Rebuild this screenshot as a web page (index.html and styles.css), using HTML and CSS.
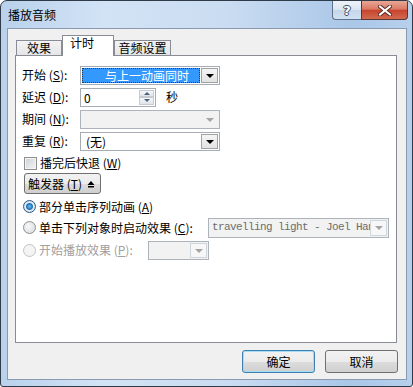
FILE: index.html
```html
<!DOCTYPE html>
<html lang="zh-CN">
<head>
  <meta charset="UTF-8">
  <title>播放音频</title>
  <link rel="stylesheet" href="styles.css">
</head>
<body>
  <div class="window">
    <div class="titlebar">
      <span class="title">播放音频</span>
      <div class="caption">
        <span class="cap-btn help">?</span>
        <span class="cap-btn close">
          <svg width="14" height="11" viewBox="0 0 14 11">
            <path d="M2 1.5 L12 9.5 M12 1.5 L2 9.5" stroke="#5a2a22" stroke-width="4" stroke-linecap="square"/>
            <path d="M2 1.5 L12 9.5 M12 1.5 L2 9.5" stroke="#fff" stroke-width="2" stroke-linecap="square"/>
          </svg>
        </span>
      </div>
    </div>

    <div class="client">
      <div class="tabs">
        <div class="tab first">效果</div>
        <div class="tab active">计时</div>
        <div class="tab third">音频设置</div>
      </div>

      <div class="panel">
        <div class="row">
          <span class="label">开始 (<u>S</u>):</span>
          <div class="combo">
            <span class="combo-sel">与上一动画同时</span>
            <span class="drop"><i class="arrow"></i></span>
          </div>
        </div>
        <div class="row">
          <span class="label">延迟 (<u>D</u>):</span>
          <div class="spin">
            <span class="spin-val">0</span>
            <span class="spin-btns">
              <span class="spin-btn"><i class="up"></i></span>
              <span class="spin-btn"><i class="down"></i></span>
            </span>
          </div>
          <span class="unit">秒</span>
        </div>
        <div class="row">
          <span class="label">期间 (<u>N</u>):</span>
          <div class="combo disabled">
            <span class="combo-text"></span>
            <span class="drop flat"><i class="arrow grey"></i></span>
          </div>
        </div>
        <div class="row">
          <span class="label">重复 (<u>R</u>):</span>
          <div class="combo">
            <span class="combo-text">(无)</span>
            <span class="drop"><i class="arrow"></i></span>
          </div>
        </div>
        <div class="row check-row">
          <span class="checkbox"></span>
          <span>播完后快退 (<u>W</u>)</span>
        </div>
        <div class="row trigger-row">
          <button class="trigger">
            <span class="trigger-text">触发器 (<u>T</u>)</span>
            <svg width="8" height="8" viewBox="0 0 8 8"><polygon points="0.5,5 4,1 7.5,5" fill="#000"/><rect x="1" y="6" width="6" height="1.5" fill="#000"/></svg>
          </button>
        </div>
        <div class="row radio-row first-radio">
          <span class="radio on"></span>
          <span>部分单击序列动画 (<u>A</u>)</span>
        </div>
        <div class="row radio-row">
          <span class="radio"></span>
          <span class="radio-label wide">单击下列对象时启动效果 (<u>C</u>):</span>
          <div class="combo disabled long">
            <span class="combo-text mono">travelling light - Joel Hanson</span>
            <span class="drop box"><i class="arrow grey"></i></span>
          </div>
        </div>
        <div class="row radio-row last">
          <span class="radio off"></span>
          <span class="radio-label narrow muted">开始播放效果 (<u>P</u>):</span>
          <div class="combo disabled short">
            <span class="combo-text"></span>
            <span class="drop box"><i class="arrow grey"></i></span>
          </div>
        </div>
      </div>

      <div class="footer">
        <button class="btn default">确定</button>
        <button class="btn">取消</button>
      </div>
    </div>
  </div>
</body>
</html>
```

FILE: styles.css
```css
* {
  box-sizing: border-box;
}

body {
  margin: 0;
  font-family: "Noto Sans CJK SC", sans-serif;
  font-size: 12px;
  color: #000;
}

u {
  text-decoration: underline;
}

.window {
  width: 413px;
  height: 387px;
  border: 1px solid #2f3b48;
  border-radius: 7px 7px 3px 3px;
  background: linear-gradient(to right, #b9d1ec 0%, #d2e3f5 25%, #cadcf1 55%, #aac7e8 85%, #b7d0ec 100%);
  display: flex;
  flex-direction: column;
  overflow: hidden;
}

/* title bar */
.titlebar {
  height: 27px;
  display: flex;
  align-items: flex-start;
  padding-left: 7px;
}

.title {
  margin-top: 7px;
  line-height: 14px;
}

.caption {
  margin-left: auto;
  margin-right: 4px;
  display: flex;
  height: 19px;
}

.cap-btn {
  display: flex;
  align-items: center;
  justify-content: center;
  height: 19px;
}

.help {
  width: 29px;
  border: 1px solid #5e718a;
  border-top: none;
  border-right: none;
  border-radius: 0 0 0 4px;
  background: linear-gradient(#eef3f9 0%, #dbe6f2 48%, #c5d6ea 52%, #d3e2f2 100%);
  color: #fff;
  font-family: "DejaVu Sans", sans-serif;
  font-weight: bold;
  font-size: 13px;
  text-shadow: 1px 0 0 #3c4a5c, -1px 0 0 #3c4a5c, 0 1px 0 #3c4a5c, 0 -1px 0 #3c4a5c;
}

.close {
  width: 47px;
  border: 1px solid #5a3630;
  border-top: none;
  border-radius: 0 0 4px 0;
  background: linear-gradient(#e8a797 0%, #da7a64 45%, #c8442e 52%, #d26a50 100%);
}

/* client area */
.client {
  margin: 0 5px 0 6px;
  height: 352px;
  border: 1px solid #8a9bb0;
  background: #f0f0f0;
}

.tabs {
  display: flex;
  align-items: flex-end;
  height: 26px;
  padding: 6px 0 0 8px;
}

.tab {
  height: 15px;
  border: 1px solid #898c95;
  border-bottom: none;
  background: linear-gradient(#f3f3f3, #e6e6e6);
  line-height: 14px;
  text-align: center;
}

.tab.first {
  width: 46px;
}

.tab.third {
  width: 57px;
}

.tab.active {
  position: relative;
  z-index: 1;
  width: 52px;
  height: 21px;
  margin-bottom: -1px;
  background: #fff;
  text-align: left;
  padding-left: 7px;
}

.panel {
  margin-left: 7px;
  width: 382px;
  height: 288px;
  border: 1px solid #898c95;
  background: #fff;
  padding: 8px 0 0 6px;
}

.row {
  display: flex;
  align-items: center;
  height: 22px;
  line-height: 14px;
}

.label {
  width: 58px;
  white-space: nowrap;
}

/* combo boxes */
.combo {
  display: flex;
  width: 140px;
  height: 19px;
  border: 1px solid #a6acb4;
  padding: 1px;
  background: #fff;
}

.combo-sel {
  flex: 1;
  margin-right: 1px;
  border: 1px dotted #333;
  background: #3399ff;
  color: #fff;
  padding-left: 22px;
  line-height: 13px;
}

.combo-text {
  flex: 1;
  padding-left: 4px;
  line-height: 15px;
  overflow: hidden;
  white-space: nowrap;
}

.drop {
  width: 17px;
  display: flex;
  align-items: center;
  justify-content: center;
  border: 1px solid #a2a2a2;
  background: linear-gradient(#f5f5f5, #e2e2e2);
}

.drop.flat {
  border: none;
  background: none;
}

.drop.box {
  border: 1px solid #cfd5dc;
  background: #f7f7f7;
}

.arrow {
  width: 0;
  height: 0;
  border-left: 4px solid transparent;
  border-right: 4px solid transparent;
  border-top: 4px solid #000;
  margin-top: 1px;
}

.arrow.grey {
  border-top-color: #a3a3a3;
}

.combo.disabled {
  background: #f2f2f2;
  border-color: #adb3bb;
}

.combo.long {
  width: 181px;
  height: 20px;
}

.combo.short {
  width: 61px;
}

.mono {
  font-family: "Liberation Mono", monospace;
  font-size: 11px;
  letter-spacing: -0.6px;
  color: #6d6d6d;
  padding-left: 2px;
}

/* spinner */
.spin {
  display: flex;
  width: 76px;
  height: 19px;
  border: 1px solid #a6acb4;
  background: #fff;
  padding: 1px;
}

.spin-val {
  flex: 1;
  padding-left: 2px;
  line-height: 15px;
}

.spin-btns {
  width: 15px;
  display: flex;
  flex-direction: column;
}

.spin-btn {
  flex: 1;
  display: flex;
  align-items: center;
  justify-content: center;
  border: 1px solid #c6cbd2;
  background: linear-gradient(#f6f7f9, #e0e4ea);
}

.up,
.down {
  width: 0;
  height: 0;
  border-left: 3px solid transparent;
  border-right: 3px solid transparent;
}

.up {
  border-bottom: 3px solid #4c607e;
}

.down {
  border-top: 3px solid #4c607e;
}

.unit {
  margin-left: 10px;
}

/* checkbox, trigger, radios */
.check-row {
  height: 21px;
}

.checkbox {
  width: 13px;
  height: 13px;
  margin: 1px 3px 0 2px;
  border: 1px solid #8e8f8f;
  background: linear-gradient(135deg, #cdd1d6, #f4f4f4);
  box-shadow: inset 0 0 0 1px #f4f4f4;
}

.trigger-row {
  height: 21px;
}

.trigger {
  display: flex;
  align-items: center;
  gap: 5px;
  width: 77px;
  height: 21px;
  margin-left: 2px;
  padding: 0 0 0 3px;
  border: 1px solid #707070;
  border-radius: 3px;
  background: linear-gradient(#f2f2f2 0%, #ebebeb 50%, #dddddd 51%, #cfcfcf 100%);
  font-family: inherit;
  font-size: 12px;
  line-height: 14px;
  color: #000;
}

.trigger-text {
  white-space: nowrap;
  flex-shrink: 0;
}

.trigger svg {
  flex-shrink: 0;
}

.radio-row {
  height: 21px;
}

.radio-row.first-radio {
  margin-top: 2px;
}

.radio-row.last {
  height: 22px;
  margin-top: 1px;
}

.radio {
  width: 13px;
  height: 13px;
  margin: 0 3px 0 1px;
  border-radius: 50%;
  border: 1px solid #8e8f8f;
  background: radial-gradient(circle at 40% 40%, #f8f8f8, #d4d7db);
}

.radio.on {
  border-color: #2c5a83;
  background: radial-gradient(circle, #6fc0f5 0px, #1f6fb5 3px, #e9f1f8 4px, #c9d2dc 6px);
}

.radio.off {
  border-color: #c4c4c4;
  background: #f4f4f4;
}

.radio-label {
  white-space: nowrap;
}

.radio-label.wide {
  width: 169px;
}

.radio-label.narrow {
  width: 109px;
}

.muted {
  color: #a0a0a0;
}

/* footer buttons */
.footer {
  display: flex;
  justify-content: flex-end;
  gap: 10px;
  padding: 7px 8px 0 0;
}

.btn {
  width: 73px;
  height: 23px;
  border: 1px solid #707070;
  border-radius: 3px;
  background: linear-gradient(#f2f2f2 0%, #ebebeb 50%, #dddddd 51%, #cfcfcf 100%);
  font-family: inherit;
  font-size: 12px;
  color: #000;
  padding: 0;
}

.btn.default {
  border-color: #3c7fb1;
  box-shadow: inset 0 0 0 1px #a6dcf6;
}
```
